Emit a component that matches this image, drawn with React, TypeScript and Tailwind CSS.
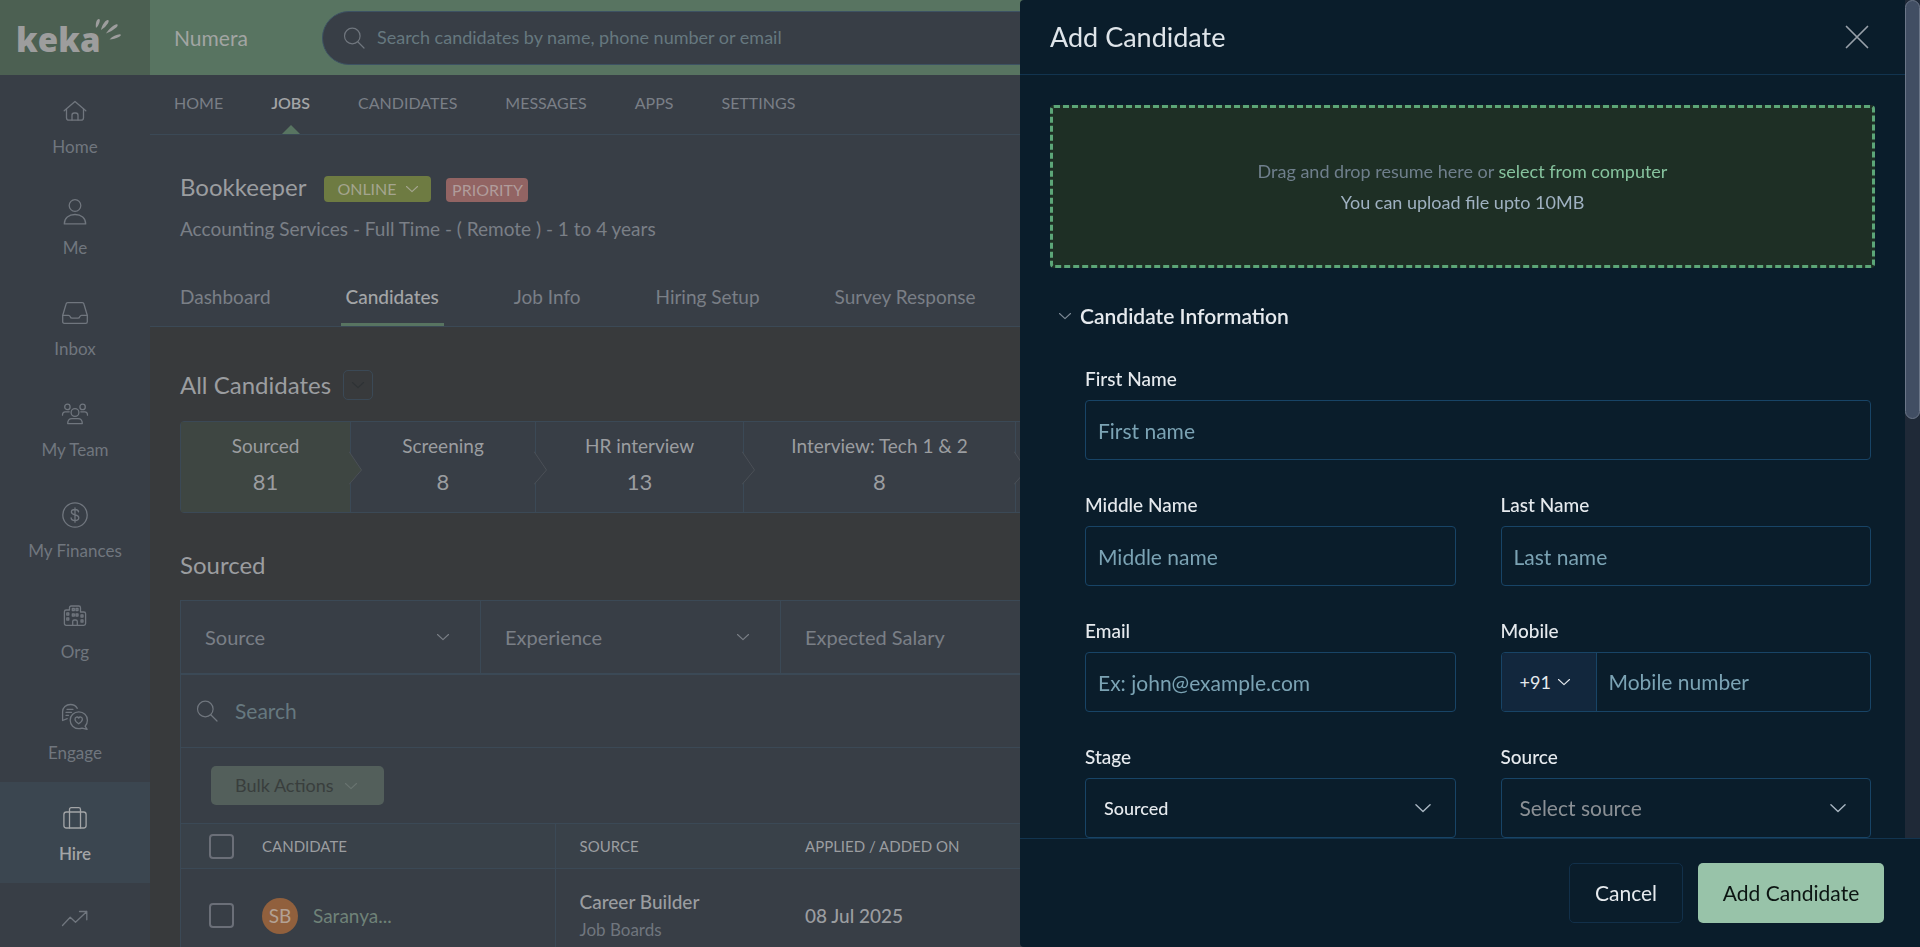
import type { ReactNode } from 'react';

const line = {
  fill: 'none',
  stroke: 'currentColor',
  strokeLinecap: 'round',
  strokeLinejoin: 'round',
} as const;

function NavIcon({ children }: { children: ReactNode }) {
  return (
    <svg width="28" height="28" viewBox="0 0 28 28" strokeWidth="1.3" aria-hidden="true" {...line}>
      {children}
    </svg>
  );
}

function Chevron({ className, size = 14 }: { className?: string; size?: number }) {
  return (
    <svg width={size} height={size} viewBox="0 0 14 14" strokeWidth="1.1" className={className} aria-hidden="true" {...line}>
      <path d="M1.500 4.500 7 9.700l5.500-5.200" />
    </svg>
  );
}

function SearchIcon() {
  return (
    <svg width="22" height="22" viewBox="0 0 22 22" strokeWidth="1.2" className="shrink-0" aria-hidden="true" {...line}>
      <circle cx="9.300" cy="9" r="7.800" />
      <path d="m15 15 6 6" />
    </svg>
  );
}

const sidebarItems = [
  {
    id: 'home',
    label: 'Home',
    icon: (
      <NavIcon>
        <path d="M3.200 13.800 14 4.400l10.800 9.400" />
        <path d="M5.500 12v8.700q0 2.500 2.500 2.500h12q2.500 0 2.500-2.500V12" />
        <path d="M11 23v-4.800q0-2.200 2.200-2.200h1.600q2.200 0 2.200 2.200V23" />
      </NavIcon>
    ),
  },
  {
    id: 'me',
    label: 'Me',
    icon: (
      <NavIcon>
        <circle cx="14" cy="7.500" r="5.800" />
        <path d="M3.300 25.900c0-6 4.500-9.400 10.700-9.400s10.700 3.400 10.700 9.400Z" />
      </NavIcon>
    ),
  },
  {
    id: 'inbox',
    label: 'Inbox',
    icon: (
      <NavIcon>
        <path d="M6.800 3.700h14.400q1.500 0 1.800 1.500l3.300 11.300v6.200q0 1.600-1.600 1.600H3.300q-1.600 0-1.600-1.600v-6.200L5 5.200q.3-1.500 1.800-1.500Z" />
        <path d="M1.700 16.300h5.800q1.200 0 1.600 1.200.5 1.700 2.200 1.700h5.400q1.700 0 2.200-1.700.4-1.200 1.600-1.200h5.800" />
      </NavIcon>
    ),
  },
  {
    id: 'team',
    label: 'My Team',
    icon: (
      <NavIcon>
        <circle cx="14" cy="12.500" r="3.900" />
        <path d="M6.700 23.600c0-3.200 1.800-5 4.300-5h6c2.500 0 4.300 1.800 4.300 5Z" />
        <circle cx="6.400" cy="6.900" r="2.700" />
        <circle cx="21.600" cy="6.900" r="2.700" />
        <path d="M1.500 15.200c0-2.200 1-3.400 2.700-3.400h4M26.500 15.200c0-2.200-1-3.400-2.700-3.400h-4" />
      </NavIcon>
    ),
  },
  {
    id: 'finances',
    label: 'My Finances',
    icon: (
      <NavIcon>
        <circle cx="14" cy="14" r="12.200" />
        <path d="M17.600 10.800c-.3-1.500-1.700-2.300-3.600-2.300-2.100 0-3.600 1-3.600 2.600 0 3.900 7.400 1.800 7.400 5.600 0 1.700-1.600 2.800-3.800 2.800s-3.700-1-3.900-2.700M14 6.800v14.400" />
      </NavIcon>
    ),
  },
  {
    id: 'org',
    label: 'Org',
    icon: (
      <NavIcon>
        <path d="M8.500 8V5.700q0-1.700 1.700-1.700h7.600q1.700 0 1.700 1.700V10h3.300q1.800 0 1.800 1.800v9.700q0 1.800-1.800 1.800H5.200q-1.800 0-1.800-1.800V9.800Q3.400 8 5.200 8Z" />
        <path d="M11.300 6.500h2v2h-2zM15 6.500h2v2h-2zM11.300 12h2v2h-2zM15 12h2v2h-2zM5.800 11h2v2h-2zM5.800 16h2v2h-2zM20 13h2v2h-2zM20 18h2v2h-2z" />
        <path d="M11.700 23v-3.500q0-1.500 1.500-1.500h1.600q1.500 0 1.500 1.500V23" />
      </NavIcon>
    ),
  },
  {
    id: 'engage',
    label: 'Engage',
    icon: (
      <NavIcon>
        <path d="M16.300 5.300C14.800 2.800 12.400 1.500 9.500 1.500c-4.400 0-7.900 3-7.900 7.300v8.700l4.600-1.900" />
        <path d="M6 6.300h6M5 9.300h5.500M5 12.300h2.500" />
        <path d="M17.800 8.900c4.900 0 8.600 3.500 8.600 8.300 0 2.500-.9 4.500-2.300 6l2 3.200-5-1.200a9.700 9.700 0 0 1-3.300.5c-4.900 0-8.600-3.800-8.600-8.500s3.700-8.300 8.600-8.300Z" />
        <path d="M17.700 20.800c-2.400-1.500-3.700-2.700-3.700-4.500 0-2.400 2.700-3 3.700-1.200 1-1.800 3.700-1.200 3.700 1.200 0 1.800-1.300 3-3.700 4.500Z" />
      </NavIcon>
    ),
  },
  {
    id: 'hire',
    label: 'Hire',
    active: true,
    icon: (
      <NavIcon>
        <rect x="2.900" y="8" width="22.200" height="16" rx="2.500" />
        <path d="M8.500 8v16M19.500 8v16M8.500 8V5.500q0-1.800 1.800-1.800h7.400q1.800 0 1.800 1.800V8" />
      </NavIcon>
    ),
  },
  {
    id: 'performance',
    icon: (
      <NavIcon>
        <path d="m1.500 20.500 7.700-8.300 5.300 5L25.800 6.500M18.500 6.500h7.300v8.300" />
      </NavIcon>
    ),
  },
];

const mainNav = ['HOME', 'JOBS', 'CANDIDATES', 'MESSAGES', 'APPS', 'SETTINGS'];
const jobTabs = ['Dashboard', 'Candidates', 'Job Info', 'Hiring Setup', 'Survey Response'];

const stages = [
  { label: 'Sourced', count: 81, width: 'w-[170px]' },
  { label: 'Screening', count: 8, width: 'w-[185px]' },
  { label: 'HR interview', count: 13, width: 'w-[208px]' },
  { label: 'Interview: Tech 1 & 2', count: 8, width: 'w-[272px]' },
];

const filters = ['Source', 'Experience', 'Expected Salary'];

function Sidebar() {
  return (
    <aside className="w-[150px] shrink-0 bg-[#383e46]">
      <a href="#" className="flex h-[75px] items-center bg-[#4c6052] pl-4 text-[#9d9d9d]">
        <span className="pt-1 font-['Open_Sans',sans-serif] text-[33px] leading-none font-extrabold">keka</span>
        <svg width="28" height="24" viewBox="0 0 28 24" className="-mt-4 -ml-[6px]" fill="currentColor" aria-hidden="true">
          <path d="M2 10C1.500 6 2 2 4.500 1c1.800-.2 1.500 2 .8 4Q4.200 8.500 2 10Z" />
          <path d="M7 12C8 7.500 10.500 3 13.500 2c1.800 0 1.300 2 .3 3.500Q11.500 9.500 7 12Z" />
          <path d="M12 15.500C14.500 11.500 19 7 22.500 6.200c1.900.1 1.200 2-.2 3.300Q18.500 13 12 15.500Z" />
          <path d="M15.500 21.500C18.500 18.500 22.500 16.300 26 16.300c1.700.6.5 2-1.200 2.800-3 1.500-6 2.400-9.300 2.400Z" />
        </svg>
      </a>
      <nav>
        {sidebarItems.map((item) => (
          <a
            key={item.id}
            href="#"
            aria-label={item.label ?? item.id}
            className={`flex h-[101px] flex-col items-center gap-3 pt-[22px] ${
              item.active ? 'bg-[#3b4650] text-[#a3a5a7]' : 'text-[#70767e]'
            }`}
          >
            {item.icon}
            {item.label && (
              <span className={`text-[17px] leading-5 ${item.active ? 'font-semibold' : ''}`}>{item.label}</span>
            )}
          </a>
        ))}
      </nav>
    </aside>
  );
}

function TopBar() {
  return (
    <header className="flex h-[75px] items-center bg-[#587461] pl-6">
      <span className="w-[148px] text-[21px] text-[#a2a5a3]">Numera</span>
      <label className="flex h-[54px] flex-1 items-center gap-3 rounded-l-full border border-[#3d5263] bg-[#383e46] pl-5 text-[#70767e]">
        <SearchIcon />
        <input
          type="text"
          aria-label="Search candidates"
          placeholder="Search candidates by name, phone number or email"
          className="w-full bg-transparent text-[18px] outline-none placeholder:text-[#66787f]"
        />
      </label>
    </header>
  );
}

function MainNav() {
  return (
    <nav className="flex h-[60px] gap-12 border-b border-[#3b4956] pl-6 text-base leading-5">
      {mainNav.map((item) => (
        <a
          key={item}
          href="#"
          className={`flex flex-col items-center justify-between pt-[18px] ${
            item === 'JOBS' ? 'font-semibold text-[#a3a5a7]' : 'text-[#7a7f86]'
          }`}
        >
          {item}
          {item === 'JOBS' && (
            <svg width="18" height="9" viewBox="0 0 18 9" className="fill-[#587461]" aria-hidden="true">
              <path d="M0 9 9 0l9 9Z" />
            </svg>
          )}
        </a>
      ))}
    </nav>
  );
}

function JobHeader() {
  return (
    <section className="border-b border-[#3b4956] pl-[30px]">
      <div className="flex items-start pt-[38px]">
        <h1 className="text-[24px] leading-7 text-[#9b9da0]">Bookkeeper</h1>
        <button className="mt-[3px] ml-[18px] flex h-[26px] w-[107px] items-center justify-center gap-2 rounded-[4px] bg-[#6e7b42] text-base text-[#a4a58f]">
          ONLINE
          <Chevron />
        </button>
        <span className="mt-[5px] ml-[15px] flex h-6 w-[82px] items-center justify-center rounded-[4px] bg-[#926463] text-base text-[#b09c9b]">
          PRIORITY
        </span>
      </div>
      <p className="mt-[15px] text-[19px] leading-6 text-[#7a7f86]">
        Accounting Services - Full Time - ( Remote ) - 1 to 4 years
      </p>
      <nav className="mt-[42px] -ml-[5px] flex gap-[65px] text-[19px] leading-7">
        {jobTabs.map((tab) => (
          <a
            key={tab}
            href="#"
            className={`border-b-[3px] px-[5px] pb-3 ${
              tab === 'Candidates' ? 'border-[#587461] font-medium text-[#a3a5a7]' : 'border-transparent text-[#7a7f86]'
            }`}
          >
            {tab}
          </a>
        ))}
      </nav>
    </section>
  );
}

function Pipeline() {
  return (
    <ol className="mt-[21px] flex h-[92px] rounded-l-[4px] border border-[#3b4956] bg-[#383e46] text-[#9b9da0]">
      {stages.map((stage, i) => (
        <li
          key={stage.label}
          className={`relative flex shrink-0 flex-col items-center gap-2 border-r border-[#3b4956] pt-[10px] ${stage.width} ${
            i === 0 ? 'bg-[#3e4642]' : ''
          }`}
        >
          <span className="text-[19px] leading-7">{stage.label}</span>
          <span className="text-[22px] leading-7">{stage.count}</span>
          <svg width="14" height="36" viewBox="0 0 14 36" className="absolute top-[28px] left-full z-10 -ml-px" aria-hidden="true">
            <path d="M0 1.500 12.500 20 0 34.500" fill={i === 0 ? '#3e4642' : '#383e46'} stroke="#4b5057" />
          </svg>
        </li>
      ))}
    </ol>
  );
}

function CandidateTable() {
  const box = 'block size-[25px] appearance-none rounded-[4px] border-2 border-[#6b6f78]';
  return (
    <div className="mt-[21px] border-t border-l border-[#3b4956] bg-[#383e46]">
      <div className="flex h-[74px] border-b-2 border-[#3b4956]">
        {filters.map((label) => (
          <div key={label} className="grid w-[300px] shrink-0 items-center border-r border-[#3b4956]">
            <select
              aria-label={label}
              className="h-full w-full appearance-none bg-transparent pl-6 text-[20px] text-[#7a7f86] outline-none [grid-area:1/1]"
            >
              <option>{label}</option>
            </select>
            <Chevron className="pointer-events-none mr-[30px] justify-self-end text-[#7a7f86] [grid-area:1/1]" />
          </div>
        ))}
      </div>
      <label className="flex h-[73px] items-center gap-[17px] border-b border-[#3b4956] pl-[15px] text-[#70767e]">
        <SearchIcon />
        <input
          type="text"
          aria-label="Search"
          placeholder="Search"
          className="w-full bg-transparent text-[21px] outline-none placeholder:text-[#66787f]"
        />
      </label>
      <div className="flex h-[75px] items-center pl-[30px]">
        <button className="flex h-[39px] w-[173px] items-center gap-[10px] rounded-[5px] bg-[#535f5b] pl-6 text-[18px] text-[#393e3d]">
          Bulk Actions
          <Chevron className="text-[#697470]" />
        </button>
      </div>
      <table className="w-full table-fixed text-left">
        <colgroup>
          <col className="w-[81px]" />
          <col className="w-[293px]" />
          <col className="w-[226px]" />
          <col />
        </colgroup>
        <thead className="border-y border-[#3b4956] bg-[#394149] text-[15px] text-[#9b9da0]">
          <tr className="h-[45px]">
            <th className="pl-7">
              <input type="checkbox" aria-label="Select all candidates" className={box} />
            </th>
            <th className="border-r border-[#3b4956] font-normal">CANDIDATE</th>
            <th className="pl-6 font-normal">SOURCE</th>
            <th className="pl-6 font-normal">APPLIED / ADDED ON</th>
          </tr>
        </thead>
        <tbody className="text-[19px] text-[#9b9da0]">
          <tr className="h-[94px]">
            <td className="pl-7">
              <input type="checkbox" aria-label="Select Saranya" className={box} />
            </td>
            <td className="border-r border-[#3b4956]">
              <div className="flex items-center gap-[15px]">
                <span className="flex size-9 items-center justify-center rounded-full bg-[#91603d] text-[#b3a194]">SB</span>
                <a href="#" className="text-[#6f8278]">
                  Saranya...
                </a>
              </div>
            </td>
            <td className="pl-6 leading-7">
              <div className="font-medium">Career Builder</div>
              <div className="text-[17px] leading-7 text-[#70767e]">Job Boards</div>
            </td>
            <td className="pl-6 font-medium">08 Jul 2025</td>
          </tr>
        </tbody>
      </table>
    </div>
  );
}

const field =
  'h-[60px] w-full rounded-[4px] border border-[#184466] bg-transparent px-3 text-[21px] text-[#e6eaee] outline-none placeholder:text-[#7ba3b4]';

function Field({ id, label, wide, children }: { id: string; label: string; wide?: boolean; children: ReactNode }) {
  return (
    <div className={`flex flex-col gap-2 ${wide ? 'col-span-2' : ''}`}>
      <label htmlFor={id} className="text-[19px] leading-[26px] font-medium text-[#e6eaee]">
        {label}
      </label>
      {children}
    </div>
  );
}

function SelectField({ id, value, className }: { id: string; value: string; className: string }) {
  return (
    <div className="grid items-center">
      <select
        id={id}
        className={`h-[60px] w-full appearance-none rounded-[4px] border border-[#184466] bg-transparent pl-[18px] outline-none [grid-area:1/1] ${className}`}
      >
        <option>{value}</option>
      </select>
      <Chevron size={18} className="pointer-events-none mr-6 justify-self-end text-[#a9b6c2] [grid-area:1/1]" />
    </div>
  );
}

function AddCandidateDrawer() {
  return (
    <aside className="fixed inset-y-0 right-0 z-20 flex w-[900px] max-w-full flex-col overflow-hidden rounded-l-[4px] bg-[#0a1d2b]">
      <div className="flex min-h-0 flex-1">
        <div className="flex min-w-0 flex-1 flex-col">
          <header className="flex h-[75px] shrink-0 items-center justify-between border-b border-[#12344f] pr-9 pl-[30px]">
            <h2 className="text-[27px] text-[#dfe5ea]">Add Candidate</h2>
            <button aria-label="Close">
              <svg width="24" height="24" viewBox="0 0 24 24" strokeWidth="1.7" className="text-[#98a0a9]" {...line}>
                <path d="m1.500 1.500 21 21M22.500 1.500l-21 21" />
              </svg>
            </button>
          </header>
          <div className="min-h-0 flex-1 overflow-hidden px-[30px] pt-[30px]">
            <div className="flex h-[163px] flex-col items-center justify-center rounded-[4px] border-[3px] border-dashed border-[#5ca678] bg-[#1e2f25] text-[18px] leading-[31px]">
              <p className="text-[#6f7f8c]">
                Drag and drop resume here or{' '}
                <a href="#" className="text-[#86c39e]">
                  select from computer
                </a>
              </p>
              <p className="text-[#9fb1c1]">You can upload file upto 10MB</p>
            </div>
            <h3 className="mt-[34px]">
              <button className="flex items-center gap-2 pl-2 text-[21px] leading-7 font-semibold text-[#e6eaee]">
                <Chevron className="text-[#7d8a96]" />
                Candidate Information
              </button>
            </h3>
            <form className="mt-9 mr-1 ml-[35px] grid grid-cols-2 gap-x-[45px] gap-y-8">
              <Field id="first-name" label="First Name" wide>
                <input id="first-name" type="text" placeholder="First name" className={field} />
              </Field>
              <Field id="middle-name" label="Middle Name">
                <input id="middle-name" type="text" placeholder="Middle name" className={field} />
              </Field>
              <Field id="last-name" label="Last Name">
                <input id="last-name" type="text" placeholder="Last name" className={field} />
              </Field>
              <Field id="email" label="Email">
                <input id="email" type="email" placeholder="Ex: john@example.com" className={field} />
              </Field>
              <Field id="mobile" label="Mobile">
                <div className="flex h-[60px] overflow-hidden rounded-[4px] border border-[#184466]">
                  <button
                    type="button"
                    className="flex w-[95px] shrink-0 items-center gap-[6px] border-r border-[#184466] bg-[#12273d] pl-[18px] text-[18px] text-[#e6eaee]"
                  >
                    +91
                    <Chevron />
                  </button>
                  <input
                    id="mobile"
                    type="tel"
                    placeholder="Mobile number"
                    className="min-w-0 flex-1 bg-transparent px-3 text-[21px] text-[#e6eaee] outline-none placeholder:text-[#7ba3b4]"
                  />
                </div>
              </Field>
              <Field id="stage" label="Stage">
                <SelectField id="stage" value="Sourced" className="text-[18px] font-medium text-[#e6eaee]" />
              </Field>
              <Field id="source" label="Source">
                <SelectField id="source" value="Select source" className="text-[21px] text-[#8b9095]" />
              </Field>
            </form>
          </div>
        </div>
        {/* Scroll track */}
        <div className="w-[15px] shrink-0 bg-[#1f2937]">
          <div className="h-1/2 rounded-full border border-[#6b7688] bg-[#414e63]" />
        </div>
      </div>
      <footer className="flex h-[109px] shrink-0 items-center justify-end gap-[15px] border-t border-[#12344f] pr-9 text-[21px]">
        <button className="h-[60px] w-[114px] rounded-[5px] border border-[#12304a] text-[#e6eaee]">Cancel</button>
        <button className="h-[60px] w-[186px] rounded-[5px] bg-[#98c3a9] text-[#0c1512]">Add Candidate</button>
      </footer>
    </aside>
  );
}

export default function App() {
  return (
    <div className="flex h-screen overflow-hidden bg-[#383a3c] font-['Lato','Noto_Sans',sans-serif]">
      <Sidebar />
      <div className="min-w-0 flex-1">
        <TopBar />
        <div className="bg-[#383e46]">
          <MainNav />
          <JobHeader />
        </div>
        <main className="px-[30px] pt-[43px]">
          <div className="flex items-center gap-3">
            <h2 className="text-[24px] leading-7 text-[#9b9da0]">All Candidates</h2>
            <button
              aria-label="Switch view"
              className="flex size-[30px] items-center justify-center rounded-[5px] border border-[#3b4956] text-[#2e3235]"
            >
              <Chevron />
            </button>
          </div>
          <Pipeline />
          <h2 className="mt-[38px] text-[24px] leading-7 text-[#9b9da0]">Sourced</h2>
          <CandidateTable />
        </main>
      </div>
      <AddCandidateDrawer />
    </div>
  );
}
